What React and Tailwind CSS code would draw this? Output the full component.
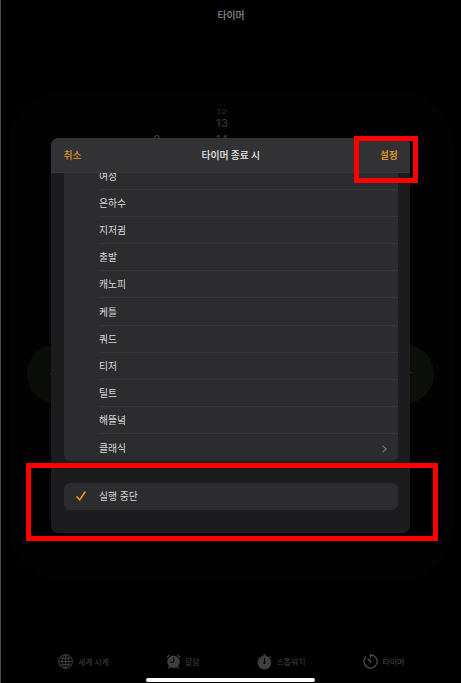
import React from "react";

const sounds = [
  "여성",
  "은하수",
  "지저귐",
  "출발",
  "캐노피",
  "케틀",
  "쿼드",
  "티저",
  "틸트",
  "해뜰녘",
  "클래식",
];

const GlobeIcon = () => (
  <svg width="15" height="15" viewBox="0 0 15 15" fill="none" stroke="#444" strokeWidth="0.9">
    <circle cx="7.5" cy="7.5" r="6.9" />
    <ellipse cx="7.5" cy="7.5" rx="3.4" ry="6.9" />
    <path d="M7.5 .6v13.8M.6 7.5h13.8M1.9 3.8q5.6 1.8 11.2 0M1.9 11.2q5.6-1.8 11.2 0" />
  </svg>
);

const AlarmIcon = () => (
  <svg width="15" height="15" viewBox="0 0 15 15" fill="none" strokeLinecap="round">
    <circle cx="7.5" cy="7.8" r="6.2" fill="#3e3e3e" />
    <path d="M1.2 3.2 3.4 1.2M13.8 3.2 11.6 1.2M2.6 14l1.6-1.7M12.4 14l-1.6-1.7" stroke="#3e3e3e" strokeWidth="1.3" />
    <path d="M7.8 4v4.3H4.6" stroke="#000" strokeWidth="0.9" />
  </svg>
);

const StopwatchIcon = () => (
  <svg width="15" height="16" viewBox="0 0 15 16" fill="none" strokeLinecap="round">
    <circle cx="7.5" cy="8.7" r="6.9" fill="#3e3e3e" />
    <path d="M6.6 .9h1.8M7.5 1v2M12.8 2.6l.8.8" stroke="#3e3e3e" strokeWidth="1.3" />
    <path d="M7.5 4.2v4.4" stroke="#000" strokeWidth="0.9" />
    <circle cx="7.5" cy="8.9" r="1.1" fill="#000" />
  </svg>
);

const TimerIcon = () => (
  <svg width="15" height="15" viewBox="0 0 15 15" fill="none" stroke="#555" strokeLinecap="round">
    <path d="M7.5 3.2V.9A6.6 6.6 0 1 1 2.8 2.9" strokeWidth="1.1" />
    <path d="M5.2 5.2 8 7.9" strokeWidth="1.4" />
  </svg>
);

const App = () => {
  return (
    <div className="relative h-[683px] w-[461px] overflow-hidden border-l border-[#4a4a4a] bg-black font-['Noto_Sans_CJK_KR','Noto_Sans',sans-serif] text-[9.8px] leading-none text-[#d8d8d8]">
      {/* dimmed timer screen */}
      <div className="absolute left-[8px] top-[92px] h-[488px] w-[444px] rounded-[50px] bg-[#010201]" />
      <div className="absolute left-[26px] top-[344px] h-[60px] w-[60px] rounded-full bg-[#0a0c07]" />
      <div className="absolute left-[373px] top-[344px] h-[60px] w-[60px] rounded-full bg-[#0c0e09]" />
      <div className="absolute left-[49px] top-[373px] h-px w-px bg-[#2b2c28]" />
      <div className="absolute left-[409px] top-[372px] h-px w-[2px] bg-[#0d3a20]" />
      <div className="absolute left-[206px] top-[104px] flex w-[30px] flex-col items-center font-['Inter',sans-serif] text-[12px]">
        <span className="h-[3px] scale-y-20 text-[9px] leading-[3px] text-[#161616]">11</span>
        <span className="h-[9px] scale-y-50 leading-[9px] text-[#2a2a2a]">12</span>
        <span className="h-[15px] scale-y-85 leading-[15px] text-[#3c3c3c]">13</span>
        <span className="h-[17px] leading-[17px] text-[#3f3f3f]">14</span>
      </div>
      <span className="absolute left-[152px] top-[134px] font-['Inter',sans-serif] text-[12px] text-[#3f3f3f]">0</span>

      <h1 className="pt-[11px] text-center text-[9.8px] font-medium text-[#8c8c8c]">타이머</h1>

      {/* sheet */}
      <div className="relative ml-[50px] mt-[117px] flex h-[395.5px] w-[359.4px] flex-col overflow-hidden rounded-[7px] bg-[#1c1c1e]">
        <div className="grid h-[35px] shrink-0 grid-cols-3 items-center border-b border-[#39393b] bg-[#323234] px-[12.5px] pt-[2px]">
          <span className="font-medium text-[#dd912a]">취소</span>
          <span className="text-center font-medium text-[#ececec]">타이머 종료 시</span>
          <span className="text-right font-bold text-[#dd912a]">설정</span>
        </div>

        <div className="mx-[12.5px] h-[288.6px] shrink-0 overflow-hidden rounded-b-[6px] bg-[#2c2c2e]">
          <ul className="-mt-[10.4px]">
            {sounds.map((sound, index) => (
              <li key={sound} className="flex h-[27.2px] pl-[35.5px]">
                <div
                  className={`flex flex-1 items-center justify-between pr-[10.5px] pt-[2px] ${
                    index < sounds.length - 1 ? "border-b border-[#363638]" : ""
                  }`}
                >
                  <span>{sound}</span>
                  {index === sounds.length - 1 && (
                    <svg width="5" height="8" viewBox="0 0 5 8" fill="none" stroke="#77777a" strokeWidth="1.2">
                      <path d="M.6.6 4.2 4 .6 7.4" />
                    </svg>
                  )}
                </div>
              </li>
            ))}
          </ul>
        </div>

        <div className="mx-[12.5px] mt-[21.4px] flex h-[27px] shrink-0 items-center rounded-[6px] bg-[#2c2c2e] pl-[12.5px]">
          <svg width="10" height="10" viewBox="0 0 10 10" fill="none" stroke="#f79b18" strokeWidth="1.5" strokeLinecap="round">
            <path d="M.9 5.8 3.7 8.9 9 1" />
          </svg>
          <span className="ml-[13px] pt-[2px] [word-spacing:0.5px]">실행 중단</span>
        </div>
      </div>

      {/* tab bar */}
      <div className="mt-[120.5px] flex h-[16px] pl-[57px] text-[7.9px] text-[#414141]">
        <div className="flex w-[108px] items-center gap-[5px]">
          <GlobeIcon />
          <span>세계 시계</span>
        </div>
        <div className="flex w-[91px] items-center gap-[4px]">
          <AlarmIcon />
          <span>알람</span>
        </div>
        <div className="flex w-[105.5px] items-center gap-[4.5px]">
          <StopwatchIcon />
          <span>스톱워치</span>
        </div>
        <div className="flex items-center gap-[5px] text-[#4a4a4a]">
          <TimerIcon />
          <span>타이머</span>
        </div>
      </div>
      <div className="ml-[145px] mt-[8px] h-[4px] w-[169px] rounded-full bg-white" />

      {/* highlights */}
      <div className="absolute left-[353px] top-[136px] h-[47px] w-[64px] border-[5px] border-[#fe0000]" />
      <div className="absolute left-[25px] top-[463px] h-[78px] w-[412px] border-[5px] border-[#fe0000]" />
    </div>
  );
};

export default App;
